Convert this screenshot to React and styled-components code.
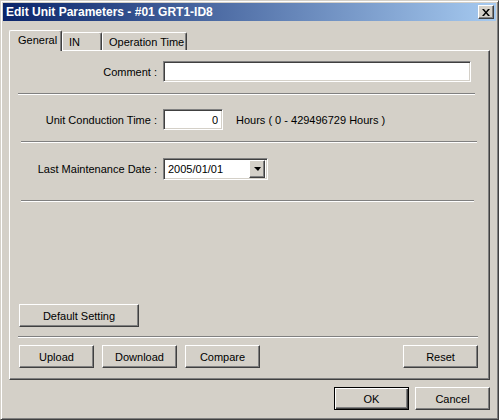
import React from 'react';
import styled, { createGlobalStyle, css } from 'styled-components';

const GlobalStyle = createGlobalStyle`
  * { box-sizing: border-box; }
  html, body { margin: 0; padding: 0; background: #d4d0c8; }
  body {
    font-family: "Liberation Sans", Arial, sans-serif;
    font-size: 11px;
    color: #000;
  }
`;

const raised = css`
  background: #d4d0c8;
  border: 1px solid;
  border-color: #fff #404040 #404040 #fff;
  box-shadow: inset -1px -1px #808080, inset 1px 1px #d4d0c8;
`;

const sunken = css`
  background: #fff;
  border: 1px solid;
  border-color: #808080 #fff #fff #808080;
  box-shadow: inset 1px 1px #404040, inset -1px -1px #d4d0c8;
`;

const Window = styled.div`
  width: 499px;
  height: 420px;
  background: #d4d0c8;
  border: 1px solid;
  border-color: #d4d0c8 #404040 #404040 #d4d0c8;
  box-shadow: inset 1px 1px #fff, inset -1px -1px #808080;
  padding: 2px;
  display: flex;
  flex-direction: column;
`;

const TitleBar = styled.div`
  height: 18px;
  display: flex;
  align-items: center;
  padding: 0 2px 0 3px;
  background: linear-gradient(to right, #0a246a, #a6caf0);
  color: #fff;
  font-weight: bold;
  font-size: 12px;
  white-space: nowrap;
`;

const CloseButton = styled.div`
  ${raised};
  margin-left: auto;
  width: 16px;
  height: 14px;
  display: flex;
  align-items: center;
  justify-content: center;
`;

const TabStrip = styled.div`
  display: flex;
  align-items: flex-end;
  height: 20px;
  margin: 9px 0 0 6px;
  position: relative;
  z-index: 1;
`;

const Tab = styled.div`
  width: ${(p) => p.$w}px;
  height: 18px;
  padding: 3px 0 0 6px;
  line-height: 13px;
  background: #d4d0c8;
  border-top: 1px solid #fff;
  border-left: 1px solid #fff;
  border-right: 1px solid #404040;
  border-radius: 2px 2px 0 0;
  box-shadow: inset -1px 0 #808080;
  white-space: nowrap;
  ${(p) =>
    p.$active &&
    css`
      height: 21px;
      margin-bottom: -1px;
      padding-left: 8px;
    `}
`;

const Panel = styled.div`
  width: 481px;
  height: 330px;
  margin-left: 6px;
  border: 1px solid;
  border-color: #fff #404040 #404040 #fff;
  box-shadow: inset -1px -1px #808080;
  padding: 10px 0 11px 0;
  display: flex;
  flex-direction: column;
`;

const FieldRow = styled.div`
  display: flex;
  align-items: center;
  margin-top: ${(p) => p.$top || 0}px;
`;

const Label = styled.div`
  width: 147px;
  margin-right: 6px;
  text-align: right;
  white-space: nowrap;
`;

const Edit = styled.input`
  ${sunken};
  width: ${(p) => p.$w}px;
  height: 21px;
  padding: 0 4px;
  font: 11px "Liberation Sans", Arial, sans-serif;
  color: #000;
  text-align: ${(p) => p.$align || 'left'};
  outline: none;
`;

const Hint = styled.span`
  margin-left: 13px;
  white-space: nowrap;
`;

const Combo = styled.div`
  ${sunken};
  width: 105px;
  height: 22px;
  display: flex;
  align-items: center;
  padding: 0 2px 0 4px;
`;

const ComboText = styled.span`
  flex: 1;
`;

const DropButton = styled.div`
  ${raised};
  width: 16px;
  height: 18px;
  display: flex;
  align-items: center;
  justify-content: center;
`;

const Arrow = styled.div`
  width: 0;
  height: 0;
  border-left: 4px solid transparent;
  border-right: 3px solid transparent;
  border-top: 4px solid #000;
`;

const Separator = styled.div`
  height: 2px;
  width: ${(p) => p.$w}px;
  margin: ${(p) => p.$top}px 0 0 ${(p) => p.$left}px;
  border-top: 1px solid #808080;
  border-bottom: 1px solid #fff;
`;

const Button = styled.button`
  ${raised};
  width: ${(p) => p.$w || 75}px;
  height: 23px;
  padding: 0;
  font: 11px "Liberation Sans", Arial, sans-serif;
  color: #000;
  ${(p) =>
    p.$default &&
    css`
      border: 1px solid #000;
      box-shadow: inset 1px 1px #fff, inset -1px -1px #404040, inset -2px -2px #808080;
    `}
`;

const DefaultRow = styled.div`
  margin: auto 0 0 9px;
`;

const ActionRow = styled.div`
  display: flex;
  gap: 8px;
  margin: 7px 11px 0 9px;
`;

const Spacer = styled.div`
  flex: 1;
`;

const Footer = styled.div`
  display: flex;
  justify-content: flex-end;
  gap: 6px;
  margin-top: 7px;
  padding-right: 6px;
`;

const CloseIcon = () => (
  <svg width="8" height="7" viewBox="0 0 8 7">
    <path d="M0 0h2l2 2.5L6 0h2L5 3.5 8 7H6L4 4.5 2 7H0l3-3.5z" fill="#000" />
  </svg>
);

const App = () => (
  <>
    <GlobalStyle />
    <Window>
      <TitleBar>
        Edit Unit Parameters - #01 GRT1-ID8
        <CloseButton>
          <CloseIcon />
        </CloseButton>
      </TitleBar>
      <TabStrip>
        <Tab $w={53} $active>General</Tab>
        <Tab $w={40}>IN</Tab>
        <Tab $w={85}>Operation Time</Tab>
      </TabStrip>
      <Panel>
        <FieldRow>
          <Label>Comment :</Label>
          <Edit $w={308} readOnly defaultValue="" />
        </FieldRow>
        <Separator $top={11} $left={8} $w={457} />
        <FieldRow $top={14}>
          <Label>Unit Conduction Time :</Label>
          <Edit $w={60} $align="right" readOnly defaultValue="0" />
          <Hint>Hours ( 0 - 429496729 Hours )</Hint>
        </FieldRow>
        <Separator $top={11} $left={11} $w={456} />
        <FieldRow $top={15}>
          <Label>Last Maintenance Date :</Label>
          <Combo>
            <ComboText>2005/01/01</ComboText>
            <DropButton>
              <Arrow />
            </DropButton>
          </Combo>
        </FieldRow>
        <Separator $top={20} $left={11} $w={453} />
        <DefaultRow>
          <Button $w={120}>Default Setting</Button>
        </DefaultRow>
        <Separator $top={9} $left={8} $w={460} />
        <ActionRow>
          <Button>Upload</Button>
          <Button>Download</Button>
          <Button>Compare</Button>
          <Spacer />
          <Button>Reset</Button>
        </ActionRow>
      </Panel>
      <Footer>
        <Button $default>OK</Button>
        <Button>Cancel</Button>
      </Footer>
    </Window>
  </>
);

export default App;
